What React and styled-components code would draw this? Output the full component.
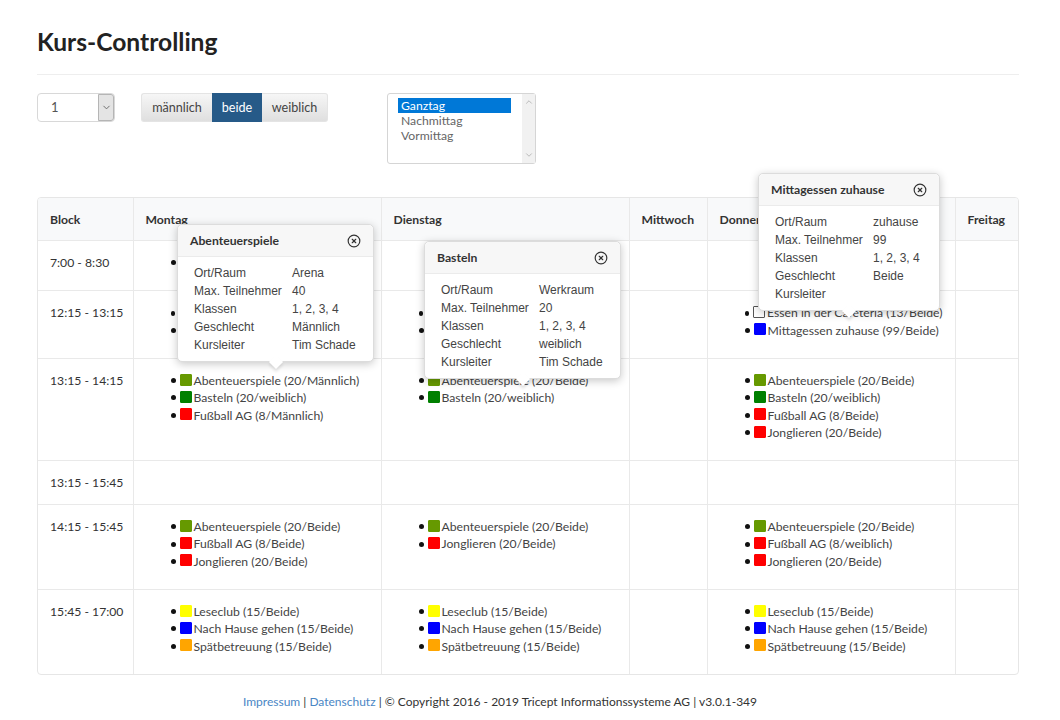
import React from 'react';
import styled, { createGlobalStyle } from 'styled-components';
import { CircleX, ChevronDown, ChevronUp } from 'lucide-react';

const Global = createGlobalStyle`
    html, body { margin: 0; padding: 0; background: #fff; }
    body { font-family: Lato, "Liberation Sans", sans-serif; font-size: 12.2px; color: #333; }
`;

const Page = styled.div`
    width: 982px;
    height: 720px;
    margin-left: 37px;
    overflow: hidden;
`;

const Title = styled.h1`
    margin: 0;
    padding: 26px 0 16px;
    font-size: 24.6px;
    line-height: 32px;
    font-weight: 700;
    color: #222;
    border-bottom: 1px solid #eee;
`;

const Controls = styled.div`
    display: flex;
    align-items: flex-start;
    margin-top: 18px;
    height: 104px;
`;

const BlockSelect = styled.div`
    width: 78px;
    height: 29px;
    box-sizing: border-box;
    margin-right: 26px;
    display: flex;
    justify-content: space-between;
    border: 1px solid #d8d8d8;
    border-radius: 4px;
    padding: 0 0 0 13px;
    font-size: 13px;
    line-height: 27px;
    color: #555;
`;

const SelectArrow = styled.span`
    width: 14px;
    display: flex;
    align-items: center;
    justify-content: center;
    background: #e4e4e4;
    border: 1px solid #b5b5b5;
    border-radius: 0 3px 3px 0;
    color: #666;
`;

const Gender = styled.div`
    display: flex;
    height: 29px;
    margin-right: 59px;
    border-radius: 3px;
    font-size: 12.6px;
`;

const GenderButton = styled.div`
    width: ${p => p.$w}px;
    text-align: center;
    line-height: 27px;
    color: ${p => (p.$active ? '#fff' : '#444')};
    background: ${p => (p.$active ? '#265a88' : 'linear-gradient(#f6f6f6, #dfdfdf)')};
    border: 1px solid ${p => (p.$active ? '#265a88' : '#e4e4e4')};
    border-width: 1px 0;
    &:first-child { border-left-width: 1px; border-radius: 3px 0 0 3px; }
    &:last-child { border-right-width: 1px; border-radius: 0 3px 3px 0; }
    box-sizing: border-box;
`;

const ListBox = styled.div`
    width: 149px;
    height: 71px;
    box-sizing: border-box;
    display: flex;
    justify-content: space-between;
    border: 1px solid #d5d5d5;
    border-radius: 3px;
    padding-left: 10px;
`;

const ListItems = styled.div`
    width: 113px;
    padding-top: 4px;
`;

const ListItem = styled.div`
    height: 15px;
    line-height: 15px;
    padding-left: 3px;
    color: ${p => (p.$selected ? '#fff' : '#666')};
    background: ${p => (p.$selected ? '#0078d7' : 'transparent')};
`;

const ScrollTrack = styled.div`
    width: 13px;
    display: flex;
    flex-direction: column;
    justify-content: space-between;
    align-items: center;
    padding: 3px 0;
    background: #f1f1f1;
    color: #b0b0b0;
`;

const Board = styled.div`
    position: relative;
`;

const TableBox = styled.div`
    border: 1px solid #e6e6e6;
    border-radius: 4px;
    overflow: hidden;
`;

const Table = styled.table`
    width: 100%;
    border-collapse: collapse;
    table-layout: fixed;
    line-height: 17.33px;

    th, td {
        padding: 13px 12px 12.8px;
        border-left: 1px solid #e9e9e9;
        vertical-align: top;
        text-align: left;
        white-space: nowrap;
    }
    th:first-child, td:first-child { border-left: none; }
    tbody tr td { border-top: 1px solid #e9e9e9; }
    th {
        height: 16px;
        padding: 12.5px 12px;
        background: #f8f9fa;
        font-weight: 700;
        color: #333;
    }
`;

const CourseList = styled.ul`
    margin: 0 0 6px;
    padding-left: 25px;
    list-style: none;
`;

const Course = styled.li`
    display: flex;
    align-items: center;
    height: 17.33px;
    white-space: nowrap;
    color: #444;

    &::before {
        content: '';
        width: 5px;
        height: 5px;
        margin-right: 4px;
        border-radius: 50%;
        background: #111;
    }
`;

const Swatch = styled.span`
    width: 10px;
    height: 10px;
    margin: -2px 2px 0 0;
    border: 1px solid ${p => (p.$color === '#fff' ? '#555' : p.$color)};
    border-radius: 1px;
    background: ${p => p.$color};
`;

const Popover = styled.div`
    position: absolute;
    left: ${p => p.$x}px;
    top: ${p => p.$y}px;
    width: ${p => p.$w}px;
    height: 138px;
    box-sizing: border-box;
    background: #fff;
    border: 1px solid #dcdcdc;
    border-radius: 5px;
    box-shadow: 0 2px 8px rgba(0, 0, 0, 0.22);

    &::after {
        content: '';
        position: absolute;
        left: 50%;
        bottom: -6px;
        width: 10px;
        height: 10px;
        margin-left: -5px;
        background: #fff;
        transform: rotate(45deg);
        box-shadow: 2px 2px 3px rgba(0, 0, 0, 0.1);
    }
`;

const PopHead = styled.div`
    height: 31px;
    display: flex;
    align-items: center;
    justify-content: space-between;
    padding: 0 12px 0 12px;
    background: #f7f7f7;
    border-bottom: 1px solid #ebebeb;
    border-radius: 5px 5px 0 0;
    font-weight: 700;
    color: #333;
    svg { color: #333; }
`;

const PopBody = styled.div`
    display: grid;
    grid-template-columns: ${p => p.$col}px 1fr;
    padding: 7px 0 0 16px;
    font-family: "Liberation Sans", Arial, sans-serif;
    font-size: 12px;
    line-height: 18px;
    color: #444;
`;

const Footer = styled.div`
    margin-top: 18px;
    padding-right: 56px;
    text-align: center;
    font-size: 12px;
    line-height: 17px;
    color: #333;
`;

const FootLink = styled.a`
    color: #4a86c5;
`;

const colors = {
    abenteuer: '#669900',
    basteln: '#008000',
    rot: '#ff0000',
    gelb: '#ffff00',
    blau: '#0000ff',
    orange: '#ffa500',
    weiss: '#fff',
};

const spaet = [
    ['gelb', 'Leseclub (15/Beide)'],
    ['blau', 'Nach Hause gehen (15/Beide)'],
    ['orange', 'Spätbetreuung (15/Beide)'],
];

const essen = [
    ['weiss', 'Essen in der Cafeteria (13/Beide)'],
    ['blau', 'Mittagessen zuhause (99/Beide)'],
];

const rows = [
    { time: '7:00 - 8:30', mo: [['gelb', 'Frühbetreuung (20/Beide)']] },
    { time: '12:15 - 13:15', mo: essen, di: essen, do: essen },
    {
        time: '13:15 - 14:15',
        mo: [
            ['abenteuer', 'Abenteuerspiele (20/Männlich)'],
            ['basteln', 'Basteln (20/weiblich)'],
            ['rot', 'Fußball AG (8/Männlich)'],
        ],
        di: [
            ['abenteuer', 'Abenteuerspiele (20/Beide)'],
            ['basteln', 'Basteln (20/weiblich)'],
        ],
        do: [
            ['abenteuer', 'Abenteuerspiele (20/Beide)'],
            ['basteln', 'Basteln (20/weiblich)'],
            ['rot', 'Fußball AG (8/Beide)'],
            ['rot', 'Jonglieren (20/Beide)'],
        ],
    },
    { time: '13:15 - 15:45' },
    {
        time: '14:15 - 15:45',
        mo: [
            ['abenteuer', 'Abenteuerspiele (20/Beide)'],
            ['rot', 'Fußball AG (8/Beide)'],
            ['rot', 'Jonglieren (20/Beide)'],
        ],
        di: [
            ['abenteuer', 'Abenteuerspiele (20/Beide)'],
            ['rot', 'Jonglieren (20/Beide)'],
        ],
        do: [
            ['abenteuer', 'Abenteuerspiele (20/Beide)'],
            ['rot', 'Fußball AG (8/weiblich)'],
            ['rot', 'Jonglieren (20/Beide)'],
        ],
    },
    { time: '15:45 - 17:00', mo: spaet, di: spaet, do: spaet },
];

const popovers = [
    { x: 140, y: 27, w: 197, col: 98, title: 'Abenteuerspiele', ort: 'Arena', max: '40', geschlecht: 'Männlich', leiter: 'Tim Schade' },
    { x: 387, y: 44, w: 197, col: 98, title: 'Basteln', ort: 'Werkraum', max: '20', geschlecht: 'weiblich', leiter: 'Tim Schade' },
    { x: 721, y: -24, w: 182, col: 98, title: 'Mittagessen zuhause', ort: 'zuhause', max: '99', geschlecht: 'Beide', leiter: '' },
];

const Courses = ({ items }) =>
    items ? (
        <CourseList>
            {items.map(([color, label]) => (
                <Course key={label}>
                    <Swatch $color={colors[color]} />
                    {label}
                </Course>
            ))}
        </CourseList>
    ) : null;

const Info = ({ p }) => (
    <Popover $x={p.x} $y={p.y} $w={p.w}>
        <PopHead>
            {p.title}
            <CircleX size={14} strokeWidth={2} />
        </PopHead>
        <PopBody $col={p.col}>
            <span>Ort/Raum</span><span>{p.ort}</span>
            <span>Max. Teilnehmer</span><span>{p.max}</span>
            <span>Klassen</span><span>1, 2, 3, 4</span>
            <span>Geschlecht</span><span>{p.geschlecht}</span>
            <span>Kursleiter</span><span>{p.leiter}</span>
        </PopBody>
    </Popover>
);

export default function App() {
    return (
        <Page>
            <Global />
            <Title>Kurs-Controlling</Title>
            <Controls>
                <BlockSelect>
                    1
                    <SelectArrow><ChevronDown size={11} /></SelectArrow>
                </BlockSelect>
                <Gender>
                    <GenderButton $w={71}>männlich</GenderButton>
                    <GenderButton $w={50} $active>beide</GenderButton>
                    <GenderButton $w={66}>weiblich</GenderButton>
                </Gender>
                <ListBox>
                    <ListItems>
                        <ListItem $selected>Ganztag</ListItem>
                        <ListItem>Nachmittag</ListItem>
                        <ListItem>Vormittag</ListItem>
                    </ListItems>
                    <ScrollTrack>
                        <ChevronUp size={10} />
                        <ChevronDown size={10} />
                    </ScrollTrack>
                </ListBox>
            </Controls>
            <Board>
                <TableBox>
                    <Table>
                        <colgroup>
                            <col style={{ width: 95 }} />
                            <col style={{ width: 248 }} />
                            <col style={{ width: 248 }} />
                            <col style={{ width: 78 }} />
                            <col style={{ width: 248 }} />
                            <col />
                        </colgroup>
                        <thead>
                            <tr>
                                <th>Block</th>
                                <th>Montag</th>
                                <th>Dienstag</th>
                                <th>Mittwoch</th>
                                <th>Donnerstag</th>
                                <th>Freitag</th>
                            </tr>
                        </thead>
                        <tbody>
                            {rows.map(r => (
                                <tr key={r.time}>
                                    <td>{r.time}</td>
                                    <td><Courses items={r.mo} /></td>
                                    <td><Courses items={r.di} /></td>
                                    <td />
                                    <td><Courses items={r.do} /></td>
                                    <td />
                                </tr>
                            ))}
                        </tbody>
                    </Table>
                </TableBox>
                {popovers.map(p => <Info key={p.title} p={p} />)}
            </Board>
            <Footer>
                <FootLink>Impressum</FootLink> | <FootLink>Datenschutz</FootLink> | © Copyright 2016 - 2019 Tricept Informationssysteme AG | v3.0.1-349
            </Footer>
        </Page>
    );
}
